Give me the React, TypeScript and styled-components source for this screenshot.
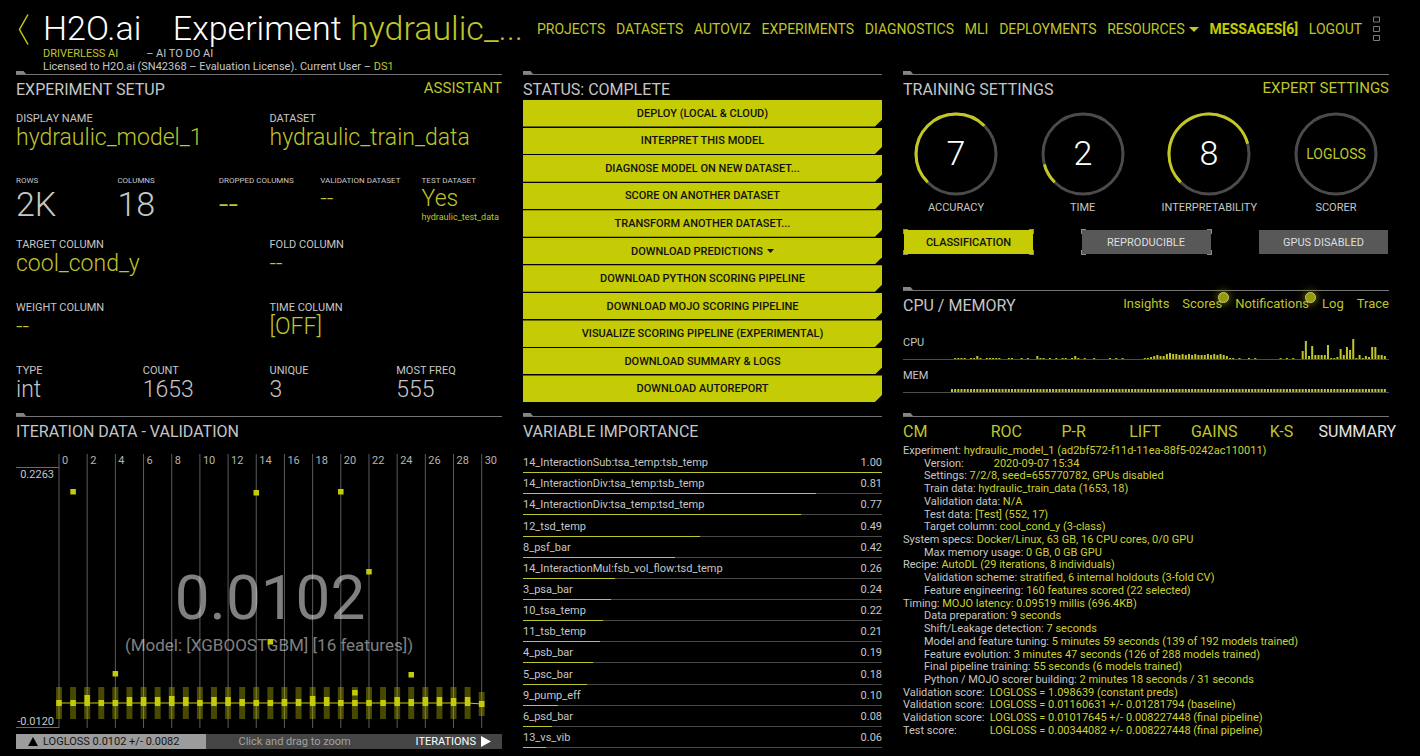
import React from "react";
import styled, { createGlobalStyle } from "styled-components";

const lime = "#c5cb04";
const limeText = "#bfc52a";
const grey = "#c6c6c6";
const sans = `Roboto, "Liberation Sans", sans-serif`;

const GlobalStyle = createGlobalStyle`
  *, *::before, *::after { box-sizing: border-box; }
  body { margin: 0; background: #000; color: ${grey}; font-family: ${sans}; }
  button { font-family: inherit; border: 0; padding: 0; cursor: pointer; }
  a { color: ${limeText}; text-decoration: none; }
  h1, h2, p, ul, ol, dl, dd { margin: 0; padding: 0; font-weight: 400; }
  ul, ol { list-style: none; }
`;

const Page = styled.div`
  min-height: 100vh;
  display: flex;
  flex-direction: column;
  padding: 0 31px 6px 16px;
`;

/* ---------- header ---------- */

const Header = styled.header`
  display: flex;
  padding-right: 9px;
`;

const Back = styled.a`
  width: 27px;
  padding: 14px 0 0 2px;
  flex: none;
`;

const Brand = styled.div`
  width: 494px;
  flex: none;
  padding-top: 10px;
`;

const Title = styled.h1`
  display: flex;
  justify-content: space-between;
  padding-right: 14px;
  font-size: 34px;
  font-weight: 300;
  line-height: 37px;
  color: #fff;
  white-space: nowrap;

  em { font-style: normal; color: ${limeText}; }
`;

const Tagline = styled.p`
  display: flex;
  gap: 28px;
  font-size: 11px;
  line-height: 13px;
  white-space: nowrap;

  em { font-style: normal; color: ${limeText}; }
`;

const Nav = styled.nav`
  flex: 1;
  height: 58px;
  display: flex;
  align-items: center;
  justify-content: space-between;
  font-size: 14px;
  white-space: nowrap;

  svg { margin-left: 4px; vertical-align: 2px; }
`;

const Strong = styled.a`
  font-weight: 700;
  color: ${lime};
`;

const MenuButton = styled.button`
  display: flex;
  background: none;

  svg { margin: 0; }
`;

/* ---------- panels ---------- */

const Board = styled.main`
  flex: 1;
  display: grid;
  grid-template-columns: 486fr 359fr 486fr;
  grid-template-rows: auto 1fr;
  column-gap: 21px;
  margin-top: -2px;
`;

const PanelBox = styled.section`
  min-width: 0;
  display: flex;
  flex-direction: column;
`;

const Rule = styled.div`
  height: 4px;
  border-bottom: 1px solid #757575;

  &::before {
    content: "";
    display: block;
    width: 10px;
    height: 3px;
    background: #858585;
    clip-path: polygon(0 0, 75% 0, 100% 100%, 0 100%);
  }
`;

const Head = styled.div`
  display: flex;
  justify-content: space-between;
  height: 25px;
  padding-top: 4px;
  font-size: 15px;
  line-height: 21px;
  white-space: nowrap;

  h2 { font-size: 16px; }
  > a { line-height: 19px; }
`;

const Fields = styled.div`
  padding-top: 12px;
  margin-right: -21px;
`;

const FieldRow = styled.dl<{ $cols: number; $last?: boolean }>`
  display: grid;
  grid-template-columns: repeat(${(p) => p.$cols}, 1fr);
  height: ${(p) => (p.$last ? 49 : 63)}px;
`;

const Label = styled.dt<{ $small?: boolean }>`
  font-size: ${(p) => (p.$small ? 8 : 11)}px;
  line-height: ${(p) => (p.$small ? 11 : 13)}px;
  text-transform: uppercase;
  white-space: nowrap;
`;

const Value = styled.dd<{ $size?: number; $plain?: boolean }>`
  font-weight: 300;
  font-size: ${(p) => p.$size ?? 23}px;
  line-height: ${(p) => (p.$size ? 36 : 25)}px;
  color: ${(p) => (p.$plain ? grey : limeText)};
`;

const Note = styled.dd`
  font-size: 9px;
  line-height: 13px;
  color: ${limeText};
`;

const Actions = styled.div`
  flex: 1;
  display: flex;
  flex-direction: column;
  gap: 1px;
  margin-bottom: 11px;
`;

const Action = styled.button`
  flex: 1;
  display: flex;
  align-items: center;
  justify-content: center;
  gap: 4px;
  background: ${lime};
  color: #111;
  font-size: 11px;
  font-weight: 500;
  clip-path: polygon(0 0, 100% 0, 100% calc(100% - 7px), calc(100% - 7px) 100%, 0 100%);
`;

const Between = styled.div`
  display: flex;
  justify-content: space-between;
`;

const Dials = styled(Between)`
  padding-top: 12px;
`;

const DialBox = styled.div`
  width: 106px;
  display: flex;
  flex-direction: column;
  align-items: center;
  font-size: 11px;
  line-height: 14px;

  svg { margin-bottom: 5px; }
`;

const Toggles = styled(Between)`
  padding: 14px 0 32px;
`;

const Toggle = styled.button<{ $fill: string; $ink: string; $corner: string }>`
  width: 131px;
  height: 26px;
  font-size: 11px;
  font-weight: ${(p) => (p.$fill === lime ? 500 : 400)};
  color: ${(p) => p.$ink};
  background:
    linear-gradient(${(p) => p.$fill} 0 0) center / calc(100% - 2px) calc(100% - 2px) no-repeat,
    linear-gradient(${(p) => p.$corner} 0 0) 0 0 / 5px 5px no-repeat,
    linear-gradient(${(p) => p.$corner} 0 0) 100% 0 / 5px 5px no-repeat,
    linear-gradient(${(p) => p.$corner} 0 0) 0 100% / 5px 5px no-repeat,
    linear-gradient(${(p) => p.$corner} 0 0) 100% 100% / 5px 5px no-repeat;
`;

const Links = styled.nav`
  display: flex;
  gap: 13px;
  font-size: 13px;
  line-height: 17px;
`;

const LinkItem = styled.a<{ $dot?: boolean }>`
  position: relative;

  &::after {
    content: ${(p) => (p.$dot ? '""' : "none")};
    position: absolute;
    top: -3px;
    right: -7px;
    width: 11px;
    height: 11px;
    border-radius: 50%;
    background: #949a08;
    border: 1px solid #c3c687;
    box-shadow: 0 0 8px #8a8f10;
  }
`;

const Meter = styled.div<{ $tall?: boolean }>`
  display: flex;
  align-items: flex-end;
  height: ${(p) => (p.$tall ? 44 : 33)}px;
  border-bottom: 1px solid #4c4c4c;
  font-size: 11px;
  line-height: 14px;

  span { width: 48px; padding-bottom: 9px; }
  svg { flex: 1; min-width: 0; height: 22px; }
`;

const Tabs = styled.div`
  display: grid;
  grid-template-columns: 88fr 71fr 68fr 62fr 79fr 49fr 76fr;
  margin-right: -7px;
  height: 28px;
  padding-top: 4px;
`;

const Tab = styled.button<{ $on?: boolean }>`
  background: none;
  text-align: left;
  font-size: 16px;
  line-height: 22px;
  height: 22px;
  white-space: nowrap;
  color: ${(p) => (p.$on ? "#e4e4e4" : limeText)};
`;

const Summary = styled.ul`
  flex: 1;
  display: flex;
  flex-direction: column;
  justify-content: space-between;
  padding-bottom: 13px;
  font-size: 11px;
  line-height: 12px;
`;

const Line = styled.li<{ $sub?: boolean; $label?: number }>`
  padding-left: ${(p) => (p.$sub ? 21 : 0)}px;
  white-space: pre;
  color: #cdd234;

  span {
    display: inline-block;
    min-width: ${(p) => p.$label ?? 0}px;
    color: ${grey};
  }
`;

const Ranking = styled.ol`
  flex: 1;
  display: flex;
  flex-direction: column;
  padding-top: 10px;
  margin-bottom: 2px;
  font-size: 11px;
`;

const Rank = styled.li`
  flex: 1;
  display: flex;
  flex-direction: column;
  justify-content: flex-end;
`;

const RankText = styled(Between)`
  line-height: 18px;
`;

const Track = styled.div`
  height: 1px;
  background: #4a4a4a;
`;

const Bar = styled.div`
  height: 1px;
  background: ${limeText};
`;

const Chart = styled.div`
  flex: 1;
  padding-top: 12px;

  svg { display: block; width: 100%; height: auto; }
`;

const Footer = styled.div`
  display: flex;
  height: 15px;
  margin-bottom: 1px;
  font-size: 11px;
  line-height: 15px;
  white-space: nowrap;
`;

const FooterScore = styled.div`
  width: 39%;
  display: flex;
  align-items: center;
  gap: 5px;
  padding-left: 12px;
  background: #9c9c9c;
  color: #161616;
`;

const FooterHint = styled.div`
  flex: 1;
  display: flex;
  justify-content: space-between;
  padding: 0 11px 0 33px;
  background: #454545;
  color: #a2a2a2;

  strong {
    display: flex;
    align-items: center;
    gap: 5px;
    font-weight: 400;
    color: #fff;
  }
`;

/* ---------- data ---------- */

const actions = [
  "DEPLOY (LOCAL & CLOUD)",
  "INTERPRET THIS MODEL",
  "DIAGNOSE MODEL ON NEW DATASET...",
  "SCORE ON ANOTHER DATASET",
  "TRANSFORM ANOTHER DATASET...",
  "DOWNLOAD PREDICTIONS",
  "DOWNLOAD PYTHON SCORING PIPELINE",
  "DOWNLOAD MOJO SCORING PIPELINE",
  "VISUALIZE SCORING PIPELINE (EXPERIMENTAL)",
  "DOWNLOAD SUMMARY & LOGS",
  "DOWNLOAD AUTOREPORT",
];

const variables: [string, string, number][] = [
  ["14_InteractionSub:tsa_temp:tsb_temp", "1.00", 100],
  ["14_InteractionDiv:tsa_temp:tsb_temp", "0.81", 81.6],
  ["14_InteractionDiv:tsa_temp:tsd_temp", "0.77", 77.4],
  ["12_tsd_temp", "0.49", 49.2],
  ["8_psf_bar", "0.42", 42.4],
  ["14_InteractionMul:fsb_vol_flow:tsd_temp", "0.26", 25.6],
  ["3_psa_bar", "0.24", 24.5],
  ["10_tsa_temp", "0.22", 22.2],
  ["11_tsb_temp", "0.21", 21.4],
  ["4_psb_bar", "0.19", 19.4],
  ["5_psc_bar", "0.18", 17.8],
  ["9_pump_eff", "0.10", 9.7],
  ["6_psd_bar", "0.08", 8.1],
  ["13_vs_vib", "0.06", 6.5],
];

type SummaryLine = { label: string; value: string; sub?: boolean; width?: number };
const summary: SummaryLine[] = [
  { label: "Experiment:", value: "hydraulic_model_1 (ad2bf572-f11d-11ea-88f5-0242ac110011)" },
  { label: "Version:", value: "2020-09-07 15:34", sub: true, width: 67 },
  { label: "Settings:", value: "7/2/8, seed=655770782, GPUs disabled", sub: true },
  { label: "Train data:", value: "hydraulic_train_data (1653, 18)", sub: true },
  { label: "Validation data:", value: "N/A", sub: true },
  { label: "Test data:", value: "[Test] (552, 17)", sub: true },
  { label: "Target column:", value: "cool_cond_y (3-class)", sub: true },
  { label: "System specs:", value: "Docker/Linux, 63 GB, 16 CPU cores, 0/0 GPU" },
  { label: "Max memory usage:", value: "0 GB, 0 GB GPU", sub: true },
  { label: "Recipe:", value: "AutoDL (29 iterations, 8 individuals)" },
  { label: "Validation scheme:", value: "stratified, 6 internal holdouts (3-fold CV)", sub: true },
  { label: "Feature engineering:", value: "160 features scored (22 selected)", sub: true },
  { label: "Timing:", value: "MOJO latency: 0.09519 millis (696.4KB)" },
  { label: "Data preparation:", value: "9 seconds", sub: true },
  { label: "Shift/Leakage detection:", value: "7 seconds", sub: true },
  { label: "Model and feature tuning:", value: "5 minutes 59 seconds (139 of 192 models trained)", sub: true },
  { label: "Feature evolution:", value: "3 minutes 47 seconds (126 of 288 models trained)", sub: true },
  { label: "Final pipeline training:", value: "55 seconds (6 models trained)", sub: true },
  { label: "Python / MOJO scorer building:", value: "2 minutes 18 seconds / 31 seconds", sub: true },
  { label: "Validation score:", value: "LOGLOSS = 1.098639 (constant preds)", width: 84 },
  { label: "Validation score:", value: "LOGLOSS = 0.01160631 +/- 0.01281794 (baseline)", width: 84 },
  { label: "Validation score:", value: "LOGLOSS = 0.01017645 +/- 0.008227448 (final pipeline)", width: 84 },
  { label: "Test score:", value: "LOGLOSS = 0.00344082 +/- 0.008227448 (final pipeline)", width: 84 },
];

const cpu = [
  0, 1, 1, 1, 1, 0, 1, 1, 3, 1, 0, 1, 1, 1, 1, 1, 0, 0, 1, 1, 0, 0, 1, 0, 1, 0, 0, 3, 1, 1, 0, 1, 0, 1, 0, 1, 1, 0, 1, 3,
  1, 0, 1, 0, 0, 1, 0, 0, 0, 0, 1, 0, 1, 0, 1, 0, 0, 0, 0, 0, 0, 1, 1, 2, 3, 4, 3, 3, 5, 6, 5, 5, 4, 5, 4, 5, 4, 5, 4, 4,
  4, 5, 4, 5, 4, 5, 4, 3, 1, 1, 0, 1, 0, 0, 1, 0, 1, 0, 0, 0, 0, 0, 0, 0, 1, 0, 1, 0, 1, 0, 0, 8, 18, 3, 13, 4, 4, 4, 4,
  14, 1, 1, 2, 10, 4, 12, 9, 20, 1, 4, 1, 3, 2, 12, 12, 4, 4, 3,
];
const mem = cpu.map(() => 3);

/* Top of each iteration's score block, in chart units */
const tops = [
  246, 246, 241, 246, 246, 243, 243, 243, 242, 243, 246, 243, 243, 245, 246, 246, 245, 245, 242, 243, 246, 246, 246, 246,
  243, 245, 243, 243, 244, 243, 247,
];
const outliers: [number, number][] = [
  [1, 37], [14, 38], [20, 37], [22, 117], [4, 219], [25, 220], [15, 187], [21, 238],
];

/* ---------- parts ---------- */

const Caret = () => (
  <svg width="10" height="5" viewBox="0 0 10 5" aria-hidden="true">
    <path d="M0 0h10L5 5z" fill="currentColor" />
  </svg>
);

const SmallCaret = () => (
  <svg width="7" height="4" viewBox="0 0 7 4" aria-hidden="true">
    <path d="M0 0h7L3.5 4z" fill="currentColor" />
  </svg>
);

const UpTriangle = () => (
  <svg width="10" height="9" viewBox="0 0 10 9" aria-hidden="true">
    <path d="M5 0l5 9H0z" fill="#000" />
  </svg>
);

const RightTriangle = () => (
  <svg width="10" height="11" viewBox="0 0 10 11" aria-hidden="true">
    <path d="M0 0l10 5.500-10 5.500z" fill="#fff" />
  </svg>
);

function Field(p: { label: string; value: string; size?: number; plain?: boolean; small?: boolean; note?: string }) {
  return (
    <div>
      <Label $small={p.small}>{p.label}</Label>
      <Value $size={p.size} $plain={p.plain}>{p.value}</Value>
      {p.note && <Note>{p.note}</Note>}
    </div>
  );
}

function Dial({ label, value }: { label: string; value: number | string }) {
  const sweep = typeof value === "number" ? (value - 1) * 30 : 0;
  const at = (deg: number) => {
    const a = ((deg + 135) * Math.PI) / 180;
    return `${42 + 40 * Math.cos(a)} ${42 + 40 * Math.sin(a)}`;
  };
  return (
    <DialBox>
      <svg width="84" height="84" viewBox="0 0 84 84" fontFamily={sans}>
        <circle cx="42" cy="42" r="40" fill="none" stroke="#4b4b4b" strokeWidth="3" />
        {sweep > 0 && (
          <path
            d={`M${at(0)}A40 40 0 ${sweep > 180 ? 1 : 0} 1 ${at(sweep)}`}
            fill="none"
            stroke="#c2c820"
            strokeWidth="3"
          />
        )}
        {sweep > 0 ? (
          <text x="42" y="53" textAnchor="middle" fill="#fff" fontWeight="300" fontSize="34">{value}</text>
        ) : (
          <text x="42" y="47" textAnchor="middle" fill={limeText} fontSize="14">{value}</text>
        )}
      </svg>
      {label}
    </DialBox>
  );
}

function Bars({ data }: { data: number[] }) {
  return (
    <svg viewBox={`0 0 ${data.length * 3.16 + 2} 22`} preserveAspectRatio="none" aria-hidden="true">
      {data.map((h, i) => (
        <rect key={i} x={i * 3.16} y={22 - h} width="2" height={h} fill={limeText} />
      ))}
    </svg>
  );
}

function IterationChart() {
  const x = (i: number) => 43 + i * 14.09;
  return (
    <svg viewBox="0 0 486 280" fontFamily={sans}>
      {tops.map((_, i) =>
        i % 2 ? null : (
          <g key={i}>
            <path d={`M${x(i)} 0V274`} stroke="#5c5c5c" />
            <text x={x(i) + 3} y="10" fontSize="11" fill="#b4b4b4">{i}</text>
          </g>
        )
      )}
      <path d="M0 13.5H43M0 273.5H43" stroke="#6a6a6a" />
      <text x="38" y="24" fontSize="11" textAnchor="end" fill={grey}>0.2263</text>
      <text x="38" y="271" fontSize="11" textAnchor="end" fill={grey}>-0.0120</text>
      <text x="254" y="165" fontSize="62" textAnchor="middle" fill="#fff" fillOpacity="0.5">0.0102</text>
      <text x="253" y="197" fontSize="17" textAnchor="middle" fill="#fff" fillOpacity="0.5">
        (Model: [XGBOOSTGBM] [16 features])
      </text>
      {tops.map((top, i) => (
        <g key={i}>
          <rect x={x(i) - 3} y={i === 30 ? 238 : 233} width="6" height={i === 30 ? 24 : 32} fill={lime} fillOpacity="0.36" />
          <rect x={x(i) - 2.75} y={top} width="5.5" height={(i === 30 ? 253 : 252) - top} fill={lime} />
        </g>
      ))}
      <path d={`M43 249H${x(29)}L${x(30)} 250`} stroke={lime} fill="none" />
      {outliers.map(([i, y]) => (
        <rect key={i} x={x(i) - 2.75} y={y - 2} width="5.5" height="5.5" fill={lime} />
      ))}
    </svg>
  );
}

export default function App() {
  return (
    <>
      <GlobalStyle />
      <Page>
        <Header>
          <Back href="#" aria-label="Back">
            <svg width="11" height="31" viewBox="0 0 11 31" fill="none" stroke={lime} strokeWidth="1.5">
              <path d="M10 .5 1.500 15.500 10 30.500" />
            </svg>
          </Back>
          <Brand>
            <Title>
              <span>H2O.ai</span>
              <span>Experiment <em>hydraulic_...</em></span>
            </Title>
            <Tagline><em>DRIVERLESS AI</em><span>– AI TO DO AI</span></Tagline>
            <Tagline><span>Licensed to H2O.ai (SN42368 – Evaluation License). Current User – <em>DS1</em></span></Tagline>
          </Brand>
          <Nav>
            <a href="#">PROJECTS</a>
            <a href="#">DATASETS</a>
            <a href="#">AUTOVIZ</a>
            <a href="#">EXPERIMENTS</a>
            <a href="#">DIAGNOSTICS</a>
            <a href="#">MLI</a>
            <a href="#">DEPLOYMENTS</a>
            <a href="#">RESOURCES<Caret /></a>
            <Strong href="#">MESSAGES[6]</Strong>
            <a href="#">LOGOUT</a>
            <MenuButton aria-label="Menu">
              <svg width="7" height="26" viewBox="0 0 7 26" fill="none" stroke="#7c7c7c">
                <path d="M.5 1h6v5h-6zM.5 10.500h6v5h-6zM.5 19.500h6v5h-6z" />
              </svg>
            </MenuButton>
          </Nav>
        </Header>

        <Board>
          <PanelBox>
            <Rule />
            <Head><h2>EXPERIMENT SETUP</h2><a href="#">ASSISTANT</a></Head>
            <Fields>
              <FieldRow $cols={2}>
                <Field label="Display name" value="hydraulic_model_1" />
                <Field label="Dataset" value="hydraulic_train_data" />
              </FieldRow>
              <FieldRow $cols={5}>
                <Field small plain size={34} label="Rows" value="2K" />
                <Field small plain size={34} label="Columns" value="18" />
                <Field small size={34} label="Dropped columns" value="--" />
                <Field small label="Validation dataset" value="--" />
                <Field small label="Test dataset" value="Yes" note="hydraulic_test_data" />
              </FieldRow>
              <FieldRow $cols={2}>
                <Field label="Target column" value="cool_cond_y" />
                <Field label="Fold column" value="--" />
              </FieldRow>
              <FieldRow $cols={2}>
                <Field label="Weight column" value="--" />
                <Field label="Time column" value="[OFF]" />
              </FieldRow>
              <FieldRow $cols={4} $last>
                <Field plain label="Type" value="int" />
                <Field plain label="Count" value="1653" />
                <Field plain label="Unique" value="3" />
                <Field plain label="Most freq" value="555" />
              </FieldRow>
            </Fields>
          </PanelBox>

          <PanelBox>
            <Rule />
            <Head><h2>STATUS: COMPLETE</h2></Head>
            <Actions>
              {actions.map((a) => (
                <Action key={a}>
                  {a}
                  {a === "DOWNLOAD PREDICTIONS" && <SmallCaret />}
                </Action>
              ))}
            </Actions>
          </PanelBox>

          <PanelBox>
            <Rule />
            <Head><h2>TRAINING SETTINGS</h2><a href="#">EXPERT SETTINGS</a></Head>
            <Dials>
              <Dial label="ACCURACY" value={7} />
              <Dial label="TIME" value={2} />
              <Dial label="INTERPRETABILITY" value={8} />
              <Dial label="SCORER" value="LOGLOSS" />
            </Dials>
            <Toggles>
              <Toggle $fill={lime} $ink="#111" $corner="#8c8c78">CLASSIFICATION</Toggle>
              <Toggle $fill="#585858" $ink="#dedede" $corner="#8c8c8c">REPRODUCIBLE</Toggle>
              <Toggle $fill="#585858" $ink="#dedede" $corner="transparent">GPUS DISABLED</Toggle>
            </Toggles>
            <Rule />
            <Head>
              <h2>CPU / MEMORY</h2>
              <Links>
                <LinkItem href="#">Insights</LinkItem>
                <LinkItem href="#" $dot>Scores</LinkItem>
                <LinkItem href="#" $dot>Notifications</LinkItem>
                <LinkItem href="#">Log</LinkItem>
                <LinkItem href="#">Trace</LinkItem>
              </Links>
            </Head>
            <Meter $tall><span>CPU</span><Bars data={cpu} /></Meter>
            <Meter><span>MEM</span><Bars data={mem} /></Meter>
          </PanelBox>

          <PanelBox>
            <Rule />
            <Head><h2>ITERATION DATA - VALIDATION</h2></Head>
            <Chart><IterationChart /></Chart>
            <Footer>
              <FooterScore><UpTriangle />LOGLOSS 0.0102 +/- 0.0082</FooterScore>
              <FooterHint>
                <span>Click and drag to zoom</span>
                <strong>ITERATIONS<RightTriangle /></strong>
              </FooterHint>
            </Footer>
          </PanelBox>

          <PanelBox>
            <Rule />
            <Head><h2>VARIABLE IMPORTANCE</h2></Head>
            <Ranking>
              {variables.map(([name, score, width]) => (
                <Rank key={name}>
                  <RankText><span>{name}</span><span>{score}</span></RankText>
                  <Track><Bar style={{ width: `${width}%` }} /></Track>
                </Rank>
              ))}
            </Ranking>
          </PanelBox>

          <PanelBox>
            <Rule />
            <Tabs role="tablist">
              {["CM", "ROC", "P-R", "LIFT", "GAINS", "K-S", "SUMMARY"].map((t) => (
                <Tab key={t} role="tab" $on={t === "SUMMARY"} aria-selected={t === "SUMMARY"}>{t}</Tab>
              ))}
            </Tabs>
            <Summary>
              {summary.map((l, i) => (
                <Line key={i} $sub={l.sub} $label={l.width}><span>{l.label}</span> {l.value}</Line>
              ))}
            </Summary>
          </PanelBox>
        </Board>
      </Page>
    </>
  );
}
